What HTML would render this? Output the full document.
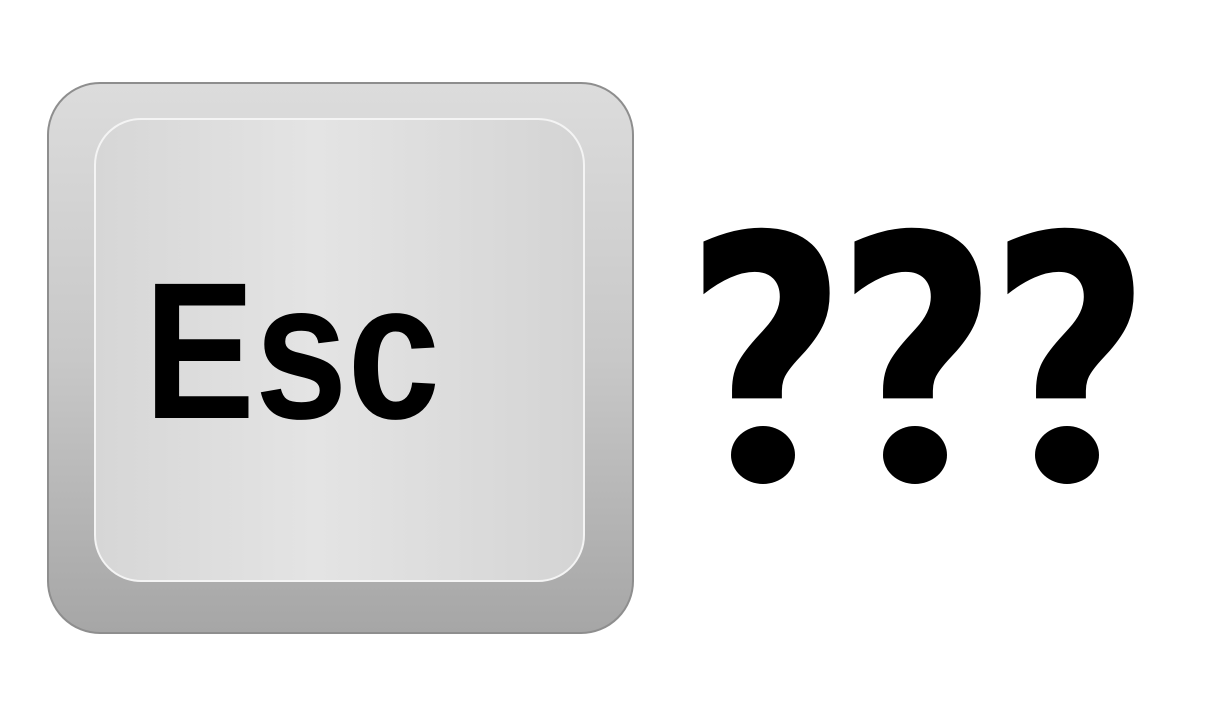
<!DOCTYPE html>
<html><head><meta charset="utf-8"><style>
html,body{margin:0;padding:0;background:#fff;width:1217px;height:711px;overflow:hidden}
</style></head><body>
<svg width="1217" height="711" viewBox="0 0 1217 711" xmlns="http://www.w3.org/2000/svg">
<defs>
<linearGradient id="og" x1="0" y1="0" x2="0" y2="1">
<stop offset="0" stop-color="#dcdcdc"/><stop offset="0.5" stop-color="#c8c8c8"/><stop offset="1" stop-color="#a6a6a6"/>
</linearGradient>
<linearGradient id="ig" x1="0" y1="0" x2="1" y2="0">
<stop offset="0" stop-color="#d6d6d6"/><stop offset="0.45" stop-color="#e4e4e4"/><stop offset="1" stop-color="#d4d4d4"/>
</linearGradient>
</defs>
<rect x="48" y="83" width="585" height="550" rx="52" fill="url(#og)" stroke="#8e8e8e" stroke-width="2"/>
<rect x="95" y="119" width="489" height="462" rx="46" fill="url(#ig)" stroke="#f4f4f4" stroke-width="2"/>
<text x="144" y="418" font-family="Liberation Sans, sans-serif" font-weight="bold" font-size="195" textLength="296" lengthAdjust="spacingAndGlyphs" fill="#000">Esc</text>
<g font-family="DejaVu Sans, sans-serif" font-weight="bold" font-size="344" fill="#000">
<text x="684" y="483" textLength="164" lengthAdjust="spacingAndGlyphs">?</text>
<text x="835" y="483" textLength="164" lengthAdjust="spacingAndGlyphs">?</text>
<text x="988" y="483" textLength="164" lengthAdjust="spacingAndGlyphs">?</text>
</g>
<g fill="#fff">
<rect x="700" y="414" width="130" height="80"/>
<rect x="852" y="414" width="130" height="80"/>
<rect x="1004" y="414" width="130" height="80"/>
</g>
<g fill="#000">
<ellipse cx="763" cy="455" rx="32" ry="29"/>
<ellipse cx="915" cy="455" rx="32" ry="29"/>
<ellipse cx="1067" cy="455" rx="32" ry="29"/>
</g>
</svg>
</body></html>
